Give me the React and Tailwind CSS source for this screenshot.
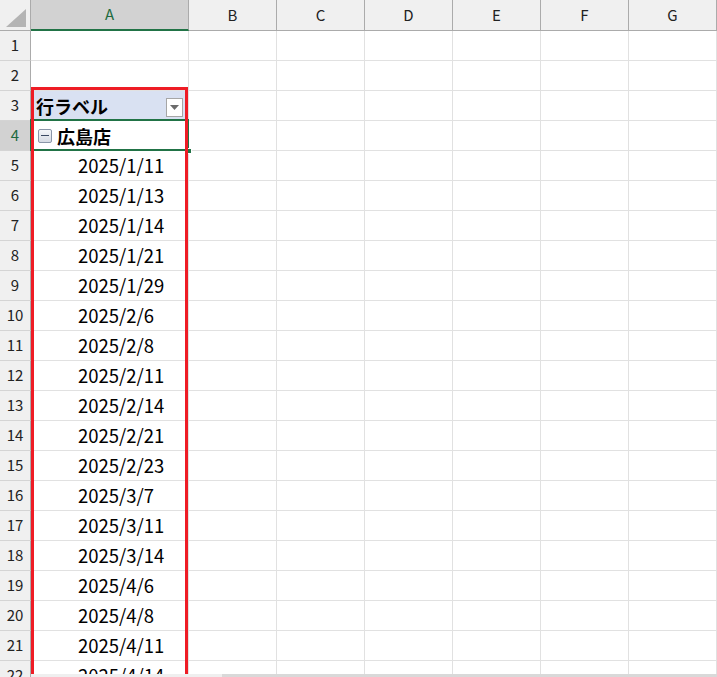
import React from "react";

const cols = ["B", "C", "D", "E", "F", "G"];
const dates = [
  "2025/1/11","2025/1/13","2025/1/14","2025/1/21","2025/1/29","2025/2/6","2025/2/8",
  "2025/2/11","2025/2/14","2025/2/21","2025/2/23","2025/3/7","2025/3/11","2025/3/14",
  "2025/4/6","2025/4/8","2025/4/11","2025/4/14",
];

function RowHeader({ n, active }) {
  return (
    <div
      className={
        "w-[31px] h-[30px] shrink-0 flex items-center justify-center border-r border-b border-r-[#ababab] border-b-[#d4d4d4] text-[15px] " +
        (active ? "bg-[#d2d2d2] text-[#1e6b40]" : "bg-[#f0f0f0] text-[#222]")
      }
    >
      {n}
    </div>
  );
}

function Cells() {
  return cols.map((c) => (
    <div key={c} className="w-[88px] h-[30px] shrink-0 border-r border-b border-[#e1e1e1] bg-white" />
  ));
}

export default function App() {
  const rows = [];
  rows.push(
    <div key={1} className="flex">
      <RowHeader n={1} />
      <div className="w-[158px] h-[30px] shrink-0 border-r border-b border-[#e1e1e1] bg-white" />
      <Cells />
    </div>
  );
  rows.push(
    <div key={2} className="flex">
      <RowHeader n={2} />
      <div className="w-[158px] h-[30px] shrink-0 border-r border-b border-[#e1e1e1] bg-white" />
      <Cells />
    </div>
  );
  rows.push(
    <div key={3} className="flex">
      <RowHeader n={3} />
      <div className="w-[158px] h-[30px] shrink-0 border-r border-b border-[#e1e1e1] bg-[#d9e1f2] flex items-center pl-[5px] pr-[5px]">
        <span className="font-bold text-[18px] leading-none text-black flex-1">行ラベル</span>
        <span className="w-[17px] h-[19px] mt-[3px] bg-white border border-[#a6a6a6] flex items-center justify-center">
          <svg width="9" height="5" viewBox="0 0 9 5"><path d="M0 0h9L4.5 5z" fill="#6b6b6b" /></svg>
        </span>
      </div>
      <Cells />
    </div>
  );
  rows.push(
    <div key={4} className="flex">
      <RowHeader n={4} active />
      <div className="relative w-[158px] h-[30px] shrink-0 border-r border-b border-[#e1e1e1] bg-white flex items-center pl-[7px]">
        <span className="w-[14px] h-[14px] rounded-[2px] border border-[#8a96a8] bg-gradient-to-b from-[#f4f6f9] to-[#d6dbe3] flex items-center justify-center mr-[5px]">
          <span className="w-[8px] h-[1px] bg-[#3b4a63]" />
        </span>
        <span className="font-bold text-[18px] leading-none text-black">広島店</span>
        <div className="absolute left-[-1px] top-[-2px] w-[159px] h-[32px] border-2 border-[#217346]" />
        <div className="absolute right-[-4px] bottom-[-4px] w-[6px] h-[6px] bg-[#217346] border border-white" />
      </div>
      <Cells />
    </div>
  );
  dates.forEach((d, i) => {
    rows.push(
      <div key={5 + i} className="flex">
        <RowHeader n={5 + i} />
        <div className="w-[158px] h-[30px] shrink-0 border-r border-b border-[#e1e1e1] bg-white flex items-center pl-[47px] text-[18.5px] leading-none text-black">
          {d}
        </div>
        <Cells />
      </div>
    );
  });

  return (
    <div
      className="relative w-[717px] h-[677px] overflow-hidden bg-white"
      style={{ fontFamily: '"Noto Sans CJK JP", "Noto Sans", sans-serif' }}
    >
      <div className="flex">
        <div className="relative w-[31px] h-[31px] shrink-0 bg-[#f0f0f0] border-r border-b border-[#ababab]">
          <svg className="absolute left-[6px] top-[9px]" width="20" height="18" viewBox="0 0 20 18">
            <path d="M20 0V18H0z" fill="#b4b4b4" />
          </svg>
        </div>
        <div className="w-[158px] h-[31px] shrink-0 bg-[#d2d2d2] border-r border-r-[#ababab] border-b-2 border-b-[#217346] flex items-center justify-center text-[15px] text-[#1e6b40]">
          A
        </div>
        {cols.map((c) => (
          <div
            key={c}
            className="w-[88px] h-[31px] shrink-0 bg-[#f0f0f0] border-r border-b border-[#ababab] flex items-center justify-center text-[15px] text-[#222]"
          >
            {c}
          </div>
        ))}
      </div>
      {rows}
      <div className="absolute left-[31px] top-[87px] w-[157px] h-[640px] border-[3px] border-[#ee1c25] pointer-events-none" />
      <div className="absolute left-[222px] bottom-0 w-[495px] h-[3px] bg-[#d9d9d9]" />
      <div className="absolute left-[31px] bottom-0 w-[191px] h-[3px] bg-[#efefef]" />
    </div>
  );
}
